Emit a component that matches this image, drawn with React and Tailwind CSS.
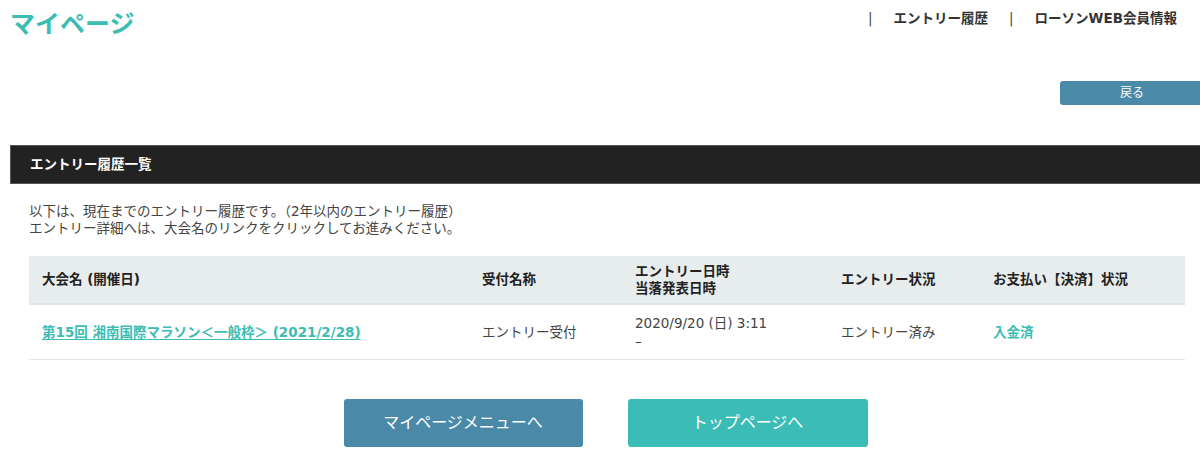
export default function App() {
  const font = { fontFamily: '"DejaVu Sans", "Noto Sans CJK JP", sans-serif' };
  return (
    <div className="w-[1200px] h-[466px] overflow-hidden bg-white text-[#333]" style={font}>
      <div className="w-[1194px] ml-[10px]">
        <header className="flex items-start justify-between h-[48px]">
          <h1 className="text-[25px] font-bold text-[#3cbdb4] leading-none mt-[10px]" style={{ fontFamily: '"Noto Sans CJK JP", sans-serif' }}>マイページ</h1>
          <nav className="flex items-center text-[13.5px] font-bold text-[#333] mt-[8px] mr-[27px]">
            <span className="text-[#444] font-normal">|</span>
            <span className="ml-[21px]">エントリー履歴</span>
            <span className="ml-[21px] text-[#444] font-normal">|</span>
            <span className="ml-[21px]">ローソンWEB会員情報</span>
          </nav>
        </header>
        <div className="flex justify-end mt-[33px]">
          <button className="w-[150px] h-[24px] rounded-[3px] bg-[#4a8aa8] text-white text-[12px] mr-[-6px]">
            <span className="mr-[6px]">戻る</span>
          </button>
        </div>
        <div className="mt-[40px] h-[39px] bg-[#222] border border-[#555] flex items-center pl-[19px]">
          <h2 className="text-white text-[13.5px] font-bold">エントリー履歴一覧</h2>
        </div>
        <div className="px-[19px]">
          <p className="mt-[19px] text-[13.5px] leading-[17px] text-[#444]">
            以下は、現在までのエントリー履歴です。（2年以内のエントリー履歴）<br />
            エントリー詳細へは、大会名のリンクをクリックしてお進みください。
          </p>
          <table className="mt-[19px] w-[1156px] table-fixed border-collapse text-[13.5px]">
            <colgroup>
              <col className="w-[440px]" />
              <col className="w-[153px]" />
              <col className="w-[206px]" />
              <col className="w-[152px]" />
              <col className="w-[205px]" />
            </colgroup>
            <thead>
              <tr className="bg-[#e7eced] h-[48px] border-b-2 border-[#dfe5e6] font-bold text-[#222] text-left">
                <th className="pl-[13px]">大会名 (開催日)</th>
                <th className="pl-[13px]">受付名称</th>
                <th className="pl-[13px] leading-[17px]">エントリー日時<br />当落発表日時</th>
                <th className="pl-[13px]">エントリー状況</th>
                <th className="pl-[13px]">お支払い【決済】状況</th>
              </tr>
            </thead>
            <tbody>
              <tr className="h-[55px] border-b border-[#e3e6e8] text-[#444]">
                <td className="pl-[13px]">
                  <a className="font-bold text-[#3cbdb4] underline underline-offset-2">第15回 湘南国際マラソン＜一般枠＞ (2021/2/28)</a>
                </td>
                <td className="pl-[13px]">エントリー受付</td>
                <td className="pl-[13px] leading-[18px] pt-[1px]">2020/9/20 (日) 3:11<br />–</td>
                <td className="pl-[13px]">エントリー済み</td>
                <td className="pl-[13px] font-bold text-[#3cbdb4]">入金済</td>
              </tr>
            </tbody>
          </table>
        </div>
        <div className="flex justify-center gap-[45px] mt-[39px] pr-[3px]">
          <button className="w-[239px] h-[48px] rounded-[3px] bg-[#4a8aa8] text-white text-[16px]">マイページメニューへ</button>
          <button className="w-[240px] h-[48px] rounded-[3px] bg-[#3cbcb6] text-white text-[16px]">トップページへ</button>
        </div>
      </div>
    </div>
  );
}
